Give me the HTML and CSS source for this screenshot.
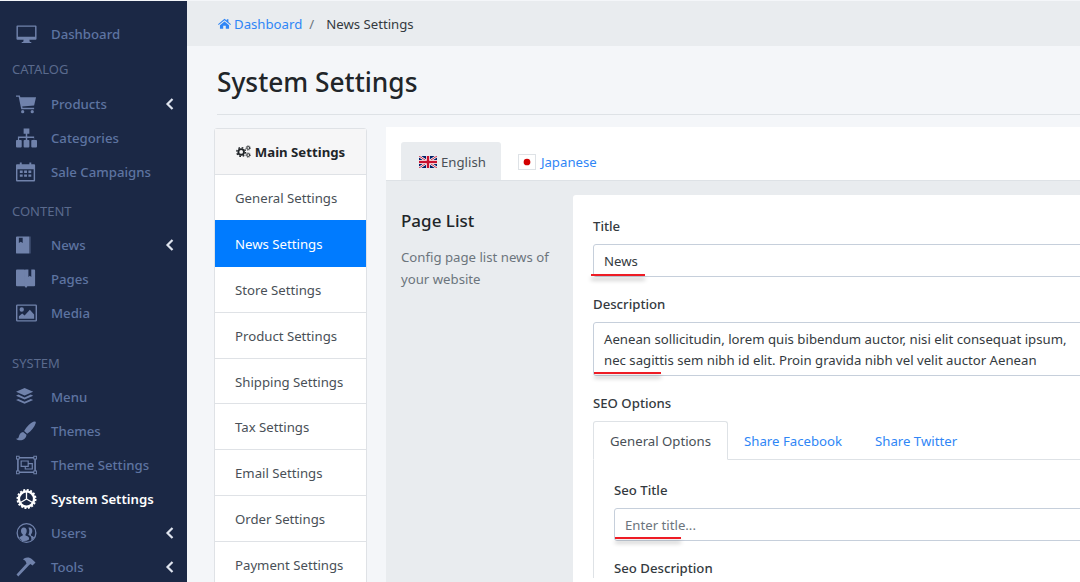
FILE: index.html
```html
<!DOCTYPE html>
<html lang="en">
<head>
<meta charset="utf-8">
<title>System Settings</title>
<link rel="stylesheet" href="styles.css">
</head>
<body>
<div class="app">
  <aside class="sidebar">
    <a class="nav-item first"><svg class="ico" viewBox="0 0 22 20"><path d="M1.5 1h19a1 1 0 0 1 1 1v13a1 1 0 0 1-1 1h-19a1 1 0 0 1-1-1V2a1 1 0 0 1 1-1zM2 2.500V13h18V2.500zM8 16h6l.5 2.500H16V19.500H6V18.500h1.500z"/></svg><span>Dashboard</span></a>
    <div class="nav-head">CATALOG</div>
    <a class="nav-item"><svg class="ico" viewBox="0 0 22 20"><path d="M0 1h4l.6 2H21l-2 8.500-12.500 1.200.4 1.300H19v1.500H5.500L2.800 2.500H0z"/><circle cx="7" cy="18" r="1.700"/><circle cx="17" cy="18" r="1.700"/></svg><span>Products</span><svg class="chev" viewBox="0 0 10 14"><path d="M7.500 2 2.500 7l5 5" /></svg></a>
    <a class="nav-item"><svg class="ico" viewBox="0 0 22 20"><path d="M8 0h6v5.500h-2.200v3H19v3.500h2a1 1 0 0 1 1 1V19a1 1 0 0 1-1 1h-4a1 1 0 0 1-1-1v-6a1 1 0 0 1 1-1h1.700v-2H11.800v2H13a1 1 0 0 1 1 1v6a1 1 0 0 1-1 1H9a1 1 0 0 1-1-1v-6a1 1 0 0 1 1-1h1.200v-2H3.300v2H5a1 1 0 0 1 1 1v6a1 1 0 0 1-1 1H1a1 1 0 0 1-1-1v-6a1 1 0 0 1 1-1h1V8.500h8.200v-3H8z"/></svg><span>Categories</span></a>
    <a class="nav-item"><svg class="ico" viewBox="0 0 22 20"><path fill-rule="evenodd" d="M4 0h2v2h8V0h2v2h3a1 1 0 0 1 1 1v16a1 1 0 0 1-1 1H1a1 1 0 0 1-1-1V3a1 1 0 0 1 1-1h3zM1.500 7v11.500h17V7zM4 8.500h3v2.500H4zM8.500 8.500h3v2.500h-3zM13 8.500h3v2.500h-3zM4 12.500h3V15H4zM8.500 12.500h3V15h-3zM13 12.500h3V15h-3z"/></svg><span>Sale Campaigns</span></a>
    <div class="nav-head gap-content">CONTENT</div>
    <a class="nav-item"><svg class="ico" viewBox="0 0 22 20"><path fill-rule="evenodd" d="M1 1h13v18H1a1 1 0 0 1-1-1V2a1 1 0 0 1 1-1zM3 2.500V8l2-1.500L7 8V2.500zM14.500 1H15v18h-.5z"/></svg><span>News</span><svg class="chev" viewBox="0 0 10 14"><path d="M7.500 2 2.500 7l5 5" /></svg></a>
    <a class="nav-item"><svg class="ico" viewBox="0 0 22 20"><path d="M1 0h8v17.500H1a1 1 0 0 1-1-1V1a1 1 0 0 1 1-1zM10 0h3v8l1.500-1.500L16 8V0h3a1 1 0 0 1 1 1v15.500a1 1 0 0 1-1 1h-7l-1.500 2-1.500-2V.500z"/></svg><span>Pages</span></a>
    <a class="nav-item"><svg class="ico" viewBox="0 0 22 20"><path fill-rule="evenodd" d="M1.500 1h19A1.500 1.500 0 0 1 22 2.500v15a1.500 1.500 0 0 1-1.500 1.500h-19A1.500 1.500 0 0 1 0 17.500v-15A1.500 1.500 0 0 1 1.500 1zM1.500 2.500v15h19v-15zM6 4a2.300 2.300 0 1 1 0 4.600A2.300 2.300 0 0 1 6 4zM3 16v-2.500l3.500-3 2.500 2 5.500-6 4.500 5V16z"/></svg><span>Media</span></a>
    <div class="nav-head gap-system">SYSTEM</div>
    <a class="nav-item"><svg class="ico" viewBox="0 0 22 20"><path d="M9 .5l9 4-9 4-9-4zM2.500 7.500 9 10.400l6.500-2.900L18 8.700l-9 4-9-4zM2.500 12 9 14.900l6.500-2.900 2.500 1.200-9 4-9-4z"/></svg><span>Menu</span></a>
    <a class="nav-item"><svg class="ico" viewBox="0 0 22 20"><path d="M19.500 0c1 0 1.500.7 1.200 1.700-1.300 4-4.500 8.500-9 11.200L8.500 10C11 5.500 16 .5 19.500 0zM7.500 11l3.500 3c-.3 3.800-3.500 5.800-6.500 5.800-1.800 0-3.500-.7-4.500-1.800 2 0 2.700-.8 3-2.300.4-2.300 2-4.500 4.500-4.700z"/></svg><span>Themes</span></a>
    <a class="nav-item"><svg class="ico" viewBox="0 0 23 20"><path fill-rule="evenodd" d="M0 0h4v1.200h15V0h4v4h-1.200v12H23v4h-4v-1.200H4V20H0v-4h1.200V4H0zM4 3v1H3v12h1v1h15v-1h1V4h-1V3zM1 1v2h2V1zM20 1v2h2V1zM1 17v2h2v-2zM20 17v2h2v-2z"/><path fill-rule="evenodd" d="M5 5h9v2.800h4.500V15h-9v-2.800H5zM6.300 6.300v4.600h6.400V6.300zM14 9.100v3.100h-3.200v1.500h6.400V9.100z"/></svg><span>Theme Settings</span></a>
    <a class="nav-item active"><svg class="ico" viewBox="0 0 20 20"><circle cx="10" cy="10" r="7.600" fill="none" stroke="#fff" stroke-width="2.400"/><circle cx="10" cy="10" r="9" fill="none" stroke="#fff" stroke-width="2" stroke-dasharray="2 1.530"/><path d="M10 10V3M10 10l6 3.500M10 10l-6 3.500" fill="none" stroke="#fff" stroke-width="1.300"/></svg><span>System Settings</span></a>
    <a class="nav-item"><svg class="ico" viewBox="0 0 20 20"><path fill-rule="evenodd" d="M10 0a10 10 0 1 1 0 20 10 10 0 0 1 0-20zm0 1.300a8.700 8.700 0 1 0 0 17.400 8.700 8.700 0 0 0 0-17.400zM7.200 4.500c2 0 3 1.500 3 3.500 0 1.500-.6 2.700-1.200 3.300v1.200c1.800.7 3.500 1.300 3.500 2.500v1.500a8 8 0 0 1-9.500-.3V15c0-1.200 2-1.800 3.200-2.500v-1.200C5.200 10.700 4.500 9.500 4.500 8c0-2 1-3.500 2.700-3.500zM13 4.500c1.800 0 2.800 1.500 2.800 3.500 0 1.500-.7 2.700-1.300 3.300v1.200c1 .5 3 1 3 2.300a8 8 0 0 1-2.700 2.200V15c0-1.700-2.100-2.700-3-3.200.7-1 1-2.300 1-3.800 0-1.300-.4-2.500-1-3.200.5-.2 1-.3 1.200-.3z"/></svg><span>Users</span><svg class="chev" viewBox="0 0 10 14"><path d="M7.500 2 2.500 7l5 5" /></svg></a>
    <a class="nav-item"><svg class="ico" viewBox="0 0 20 20"><path d="M7.500 1.500c3-1.500 6-1 8 .8l3.500 3.200-3 3-2-1.500-1.300 1L1.800 19.500 0 17.500 10 6.500l-.5-1.300C9 4 8 3 6.500 2.500z"/></svg><span>Tools</span><svg class="chev" viewBox="0 0 10 14"><path d="M7.500 2 2.500 7l5 5" /></svg></a>
  </aside>
  <main class="main">
    <nav class="crumbs">
      <svg class="home" viewBox="0 0 20 16"><path d="M10 0.500 13.500 3.500V1.500h2.500v4.200L20 9l-1 1.200-9-7.300-9 7.300L0 9zM3 10.500 10 4.800l7 5.700V16h-5v-4.500H8V16H3z"/></svg>
      <a class="crumb-link">Dashboard</a><span class="crumb-sep">/</span><span class="crumb-now">News Settings</span>
    </nav>
    <header class="page-head"><h1>System Settings</h1></header>
    <div class="columns">
      <section class="menu-card">
        <div class="menu-title"><svg class="cogs" viewBox="0 0 16 13"><circle cx="5.500" cy="7" r="3" fill="none" stroke="#212529" stroke-width="2"/><circle cx="5.500" cy="7" r="4.700" fill="none" stroke="#212529" stroke-width="1.500" stroke-dasharray="1.800 1.890"/><circle cx="13" cy="2.700" r="1.500" fill="none" stroke="#212529" stroke-width="1"/><circle cx="13" cy="2.700" r="2.400" fill="none" stroke="#212529" stroke-width=".8" stroke-dasharray="1 .88"/><circle cx="13" cy="10.300" r="1.500" fill="none" stroke="#212529" stroke-width="1"/><circle cx="13" cy="10.300" r="2.400" fill="none" stroke="#212529" stroke-width=".8" stroke-dasharray="1 .88"/></svg><span>Main Settings</span></div>
        <a class="menu-item">General Settings</a>
        <a class="menu-item current">News Settings</a>
        <a class="menu-item">Store Settings</a>
        <a class="menu-item">Product Settings</a>
        <a class="menu-item">Shipping Settings</a>
        <a class="menu-item">Tax Settings</a>
        <a class="menu-item">Email Settings</a>
        <a class="menu-item">Order Settings</a>
        <a class="menu-item">Payment Settings</a>
      </section>
      <section class="panel">
        <div class="lang-tabs">
          <a class="lang-tab on"><svg class="flag" viewBox="0 0 60 40"><rect width="60" height="40" fill="#012169"/><path d="M0 0 60 40M60 0 0 40" stroke="#fff" stroke-width="8"/><path d="M0 0 60 40M60 0 0 40" stroke="#c8102e" stroke-width="3"/><path d="M30 0V40M0 20H60" stroke="#fff" stroke-width="13"/><path d="M30 0V40M0 20H60" stroke="#c8102e" stroke-width="8"/></svg><span>English</span></a>
          <a class="lang-tab"><svg class="flag jp" viewBox="0 0 19 16"><rect width="19" height="16" fill="#fff"/><circle cx="9.500" cy="8" r="4" fill="#d30000"/></svg><span>Japanese</span></a>
        </div>
        <div class="panel-body">
          <div class="intro">
            <h2>Page List</h2>
            <p>Config page list news of your website</p>
          </div>
          <form class="form-card">
            <div class="field">
              <label>Title</label>
              <div class="control single">News<i class="mark m-title"></i></div>
            </div>
            <div class="field">
              <label>Description</label>
              <div class="control multi">Aenean sollicitudin, lorem quis bibendum auctor, nisi elit consequat ipsum, nec sagittis sem nibh id elit. Proin gravida nibh vel velit auctor Aenean<i class="mark m-desc"></i></div>
            </div>
            <label class="seo-label">SEO Options</label>
            <div class="seo-tabs">
              <a class="seo-tab on">General Options</a>
              <a class="seo-tab">Share Facebook</a>
              <a class="seo-tab">Share Twitter</a>
            </div>
            <div class="seo-body">
              <div class="field">
                <label>Seo Title</label>
                <div class="control single hint">Enter title...<i class="mark m-seo"></i></div>
              </div>
              <div class="field">
                <label>Seo Description</label>
              </div>
            </div>
          </form>
        </div>
      </section>
    </div>
  </main>
</div>
</body>
</html>
```

FILE: styles.css
```css
* { box-sizing: border-box; }
html, body { margin: 0; height: 100%; overflow: hidden; }
body {
  font-family: "Noto Sans", "Open Sans", sans-serif;
  font-size: 13.2px;
  color: #212529;
  background: #f4f6f9;
  padding-top: 1px;
}
a { text-decoration: none; }
.app { display: flex; height: 581px; overflow: hidden; }

.sidebar {
  flex: 0 0 187px;
  background: #1b2845;
  padding-top: 16px;
  color: #5e74a1;
  font-weight: 500;
}
.nav-item {
  display: flex;
  align-items: center;
  height: 34px;
  padding-left: 16px;
  position: relative;
}
.nav-item.active { color: #fff; font-weight: 600; }
.ico { width: 21px; height: 20px; margin-right: 14px; flex: none; fill: #7082ab; }
.active .ico { fill: #fff; }
.chev {
  position: absolute;
  left: 165px;
  top: 10px;
  width: 10px;
  height: 14px;
  fill: none;
  stroke: #dfe4ee;
  stroke-width: 2.200;
}
.nav-head {
  height: 36px;
  padding: 9px 0 0 12px;
  font-size: 13px;
  font-weight: 400;
  color: #5a6a8d;
}
.gap-content { height: 37px; padding-top: 11px; margin-top: 2px; }
.gap-system { height: 34px; padding-top: 8px; margin-top: 16px; }

.main { flex: none; width: 1000px; }
.crumbs {
  display: flex;
  align-items: center;
  height: 45px;
  padding-left: 31px;
  background: #e9ecef;
}
.home { width: 13px; height: 11px; fill: #2f86f6; margin-right: 3px; }
.crumb-link { color: #2f86f6; }
.crumb-sep { margin: 0 12px 0 7px; color: #6c757d; }
.crumb-now { color: #343a40; }

.page-head { margin: 0 0 0 30px; height: 69px; border-bottom: 1px solid #dee2e6; }
h1 { margin: 0; padding-top: 16px; font-size: 26.300px; font-weight: 500; line-height: 40px; color: #212529; }

.columns { display: flex; align-items: flex-start; padding: 12px 0 0 27px; gap: 19px; }
.menu-card {
  flex: 0 0 153px;
  background: #fff;
  border: 1px solid #dfe2e6;
  border-radius: 3px;
  margin-top: 1px;
}
.menu-title {
  display: flex;
  align-items: center;
  justify-content: center;
  gap: 4px;
  height: 46px;
  background: #f6f6f7;
  border-bottom: 1px solid #dfe2e6;
  font-weight: 700;
}
.cogs { width: 15px; height: 13px; }
.menu-item {
  display: flex;
  align-items: center;
  height: 45.900px;
  padding: 1px 0 0 20px;
  color: #495057;
  border-bottom: 1px solid #dfe2e6;
}
.menu-item.current {
  height: 46.900px;
  margin-top: -1px;
  padding-top: 2px;
  background: #007bff;
  color: #fff;
  border-bottom-color: #007bff;
}

.panel { flex: none; width: 717px; background: #fff; border-radius: 3px; }
.lang-tabs { display: flex; height: 54px; padding: 15px 0 0 15px; background: #fff; border-bottom: 1px solid #dee2e6; }
.lang-tab { display: flex; align-items: center; gap: 4px; height: 38px; padding: 1px 15px 0 18px; color: #2f86f6; border-radius: 3px 3px 0 0; }
.lang-tab + .lang-tab { padding-left: 17px; gap: 5px; }
.lang-tab.on { background: #e9ecef; color: #495057; }
.flag { width: 18px; height: 12px; }
.jp { border: 1px solid #dee2e6; width: 18px; height: 16px; }

.panel-body { display: flex; background: #e9ecef; padding: 14px 0 0 15px; height: 420px; }
.intro { flex: 0 0 172px; padding-top: 14px; }
h2 { margin: 0 0 13px; font-size: 17px; font-weight: 500; line-height: 24px; }
.intro p { margin: 0; line-height: 22px; color: #6c757d; }

.form-card { flex: 1; background: #fff; border-radius: 3px; padding: 21px 20px; }
.field { margin-bottom: 17px; }
label { display: block; font-weight: 500; line-height: 20px; margin-bottom: 8px; color: #343a40; }
.control {
  position: relative;
  border: 1px solid #c6cfdb;
  border-radius: 3px;
  padding: 0 10px;
  color: #343a40;
  background: #fff;
}
.single { height: 33px; line-height: 32px; }
.multi { height: 54px; line-height: 21px; padding-top: 5.500px; }
.hint { color: #6c757d; }
.seo-label { margin-bottom: 8px; }
.seo-tabs { display: flex; height: 39px; border-bottom: 1px solid #dee2e6; }
.seo-tab { display: flex; align-items: center; height: 39px; padding: 0 16px; color: #2f86f6; border-radius: 3px 3px 0 0; border: 1px solid transparent; }
.seo-tab + .seo-tab { margin-left: -1px; }
.seo-tab.on { color: #495057; border-color: #dee2e6; border-bottom-color: #fff; }
.seo-body { padding: 20px 20px 0; margin-right: -40px; border-left: 1px solid #dee2e6; }

.mark {
  position: absolute;
  height: 2px;
  background: #ee1c25;
  box-shadow: 0 4px 4px rgba(0, 0, 0, .3);
}
.m-title { left: -3px; bottom: 0; width: 54px; }
.m-desc { left: 0; bottom: 1px; width: 67px; }
.m-seo { left: 0; bottom: 1px; width: 66px; }
```
